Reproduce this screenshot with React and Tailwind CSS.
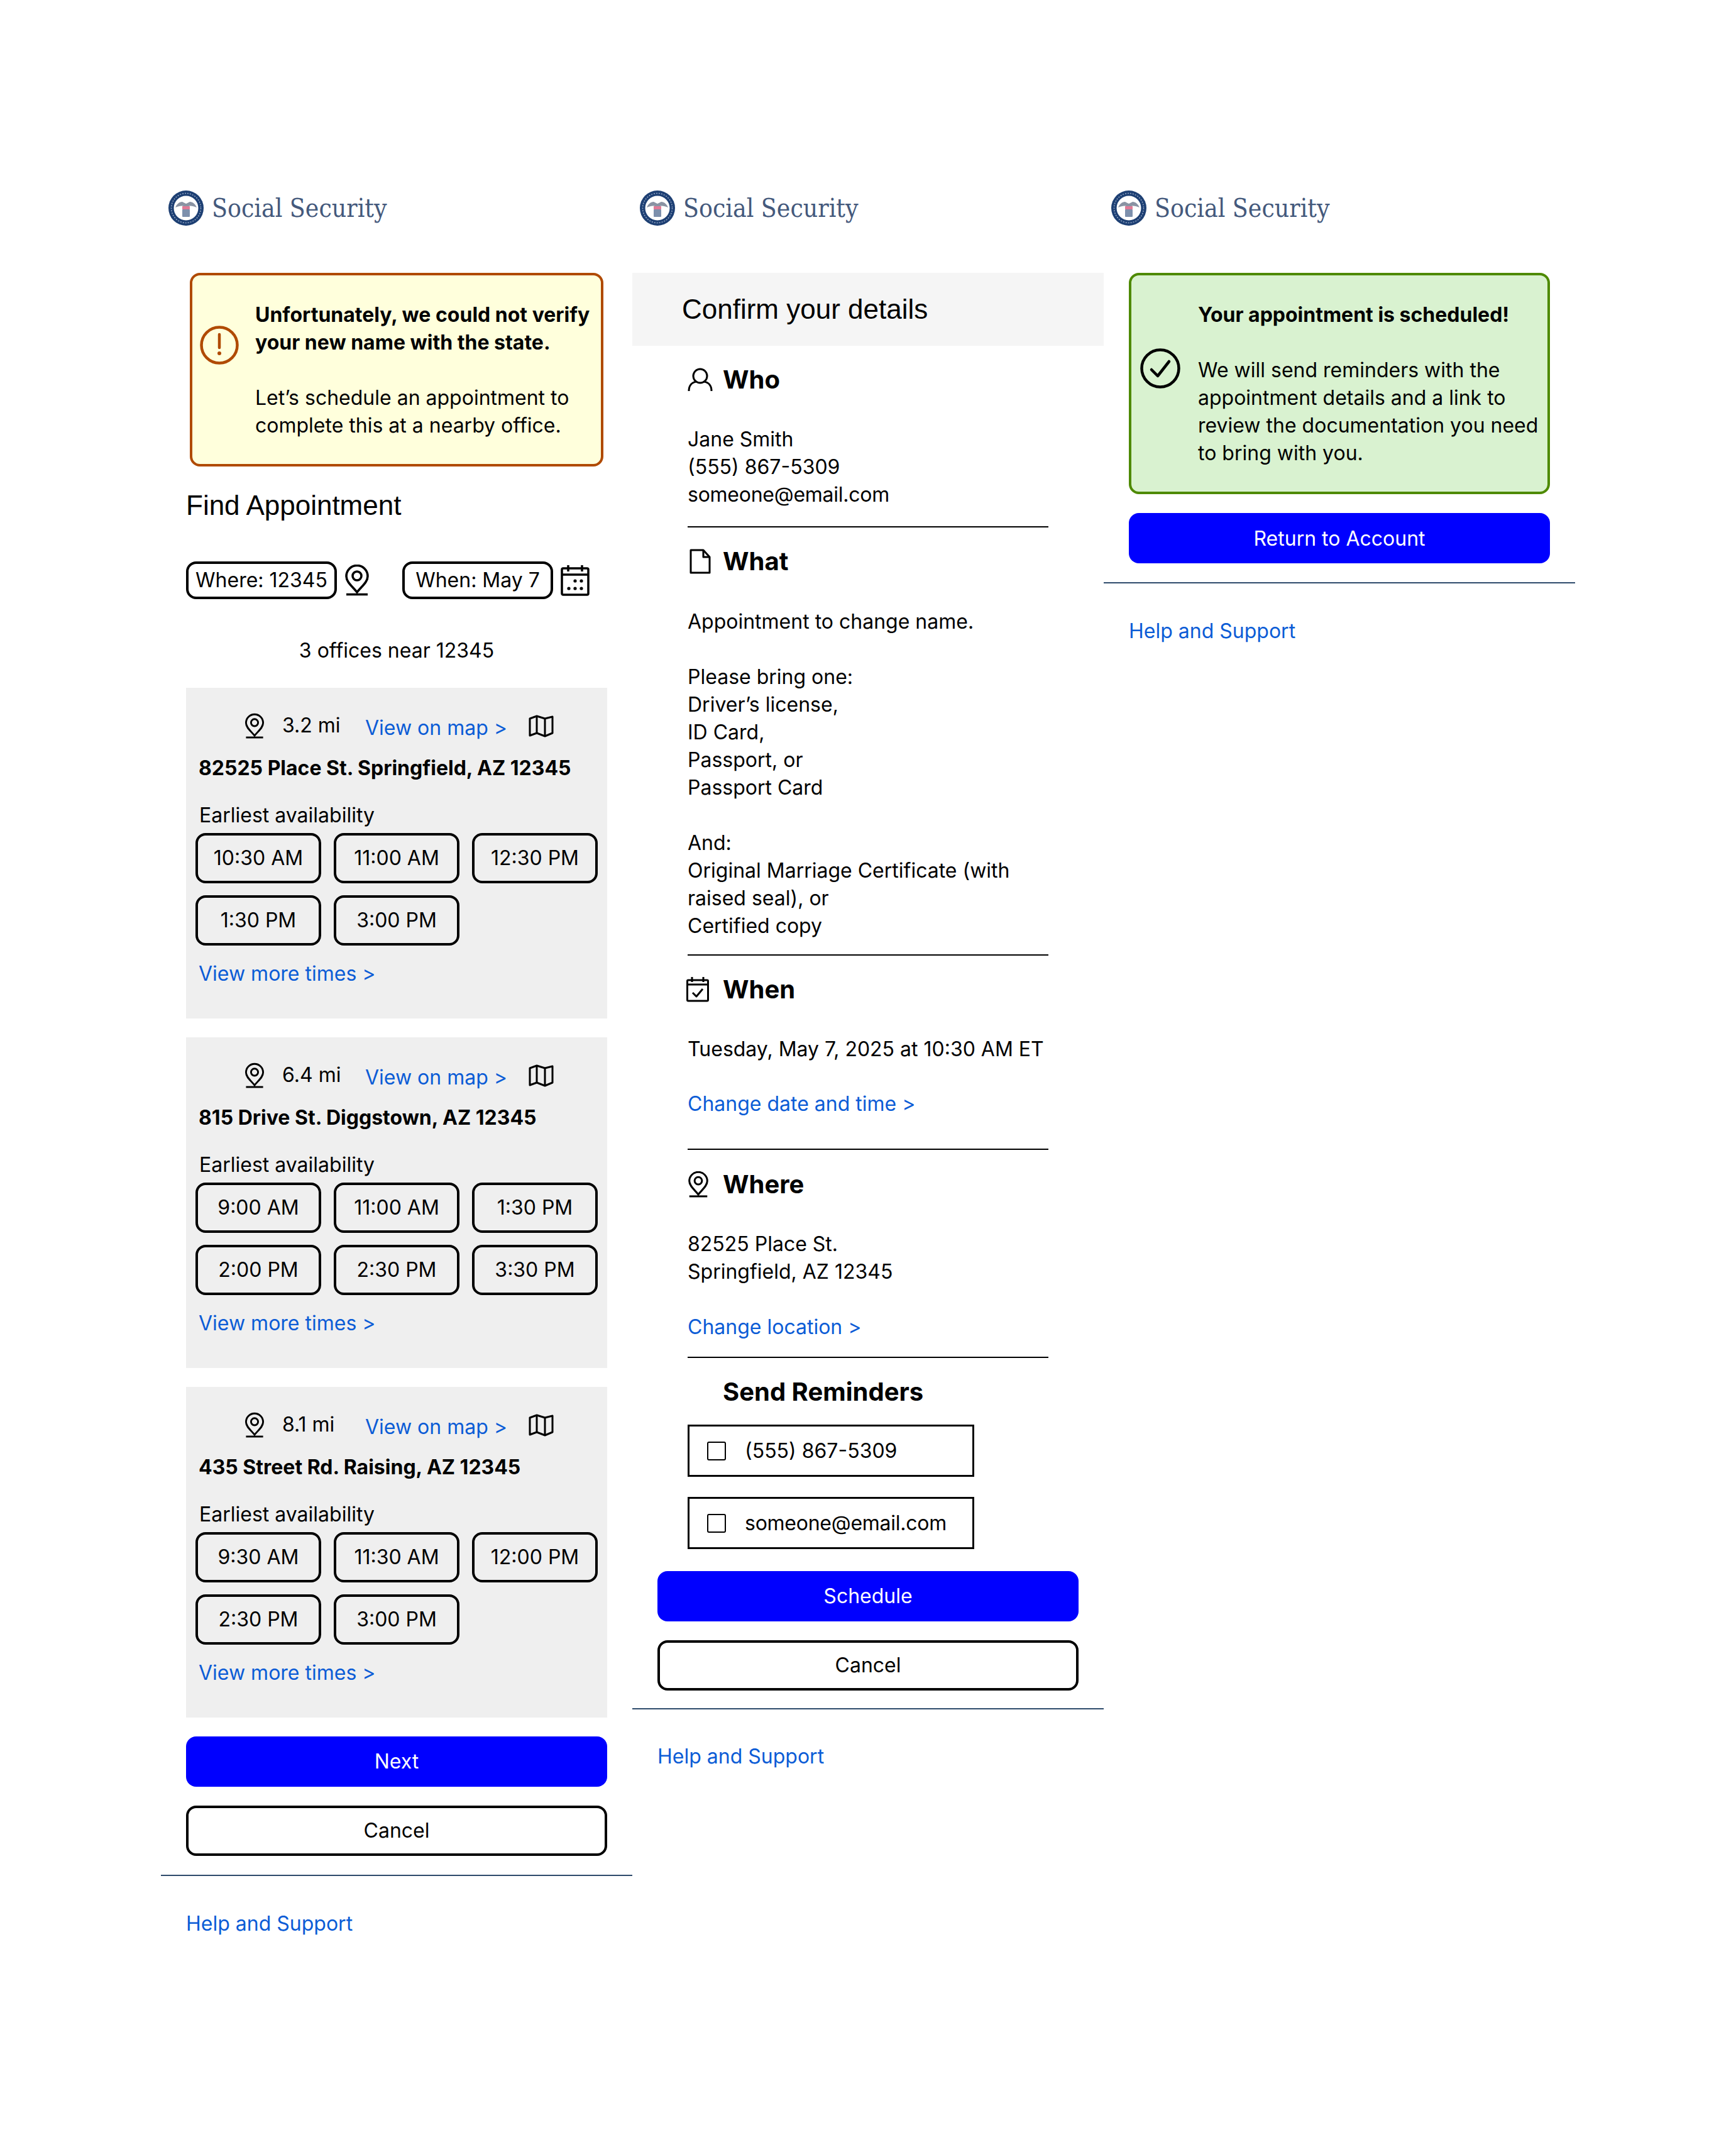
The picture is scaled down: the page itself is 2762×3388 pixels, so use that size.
const inter = "font-['Inter',sans-serif]"

function Pin({ className }) {
  return (
    <svg viewBox="0 0 40 50" fill="none" stroke="currentColor" strokeWidth="3.6" className={className}>
      <path d="M20 44C13 35 3 28 3 18.5a17 17 0 0 1 34 0C37 28 27 35 20 44Z" />
      <circle cx="20" cy="18" r="7" />
      <path d="M3 47.5h34" />
    </svg>
  )
}

function MapIcon() {
  return (
    <svg viewBox="0 0 40 36" fill="none" stroke="currentColor" strokeWidth="3" strokeLinejoin="round" className="w-[40px] h-[36px]">
      <path d="M2 6l11-4 13 4 12-3v26l-12 5-13-5-11 4Z" />
      <path d="M13 2v27M26 6v28" />
    </svg>
  )
}

function CalendarDots() {
  return (
    <svg viewBox="0 0 46 50" fill="none" stroke="currentColor" strokeWidth="3.5" strokeLinejoin="round" className="w-[46px] h-[50px]">
      <rect x="2" y="6" width="42" height="42" rx="2" />
      <path d="M2 16h42M12 1v10M34 1v10" />
      <g fill="currentColor" stroke="none">
        <circle cx="23" cy="26" r="2.6" />
        <circle cx="33" cy="26" r="2.6" />
        <circle cx="13" cy="38" r="2.6" />
        <circle cx="23" cy="38" r="2.6" />
        <circle cx="33" cy="38" r="2.6" />
      </g>
    </svg>
  )
}

function Seal() {
  return (
    <svg viewBox="0 0 56 56" className="w-[56px] h-[56px] shrink-0">
      <circle cx="28" cy="28" r="28" fill="#1d3f73" />
      <circle cx="28" cy="28" r="23.5" fill="none" stroke="#8fa3c2" strokeWidth="1.5" strokeDasharray="2 2" />
      <circle cx="28" cy="28" r="19.5" fill="#fff" />
      <path d="M11 27c2-5 6-9 11-9l6 3 6-3c5 0 9 4 11 9-5-2-9-3-13-2H24c-4-1-8 0-13 2Z" fill="#8a93a3" />
      <rect x="22" y="25" width="12" height="5" fill="#e07a96" />
      <rect x="22" y="30" width="12" height="12" rx="1" fill="#7d90ad" />
    </svg>
  )
}

function Logo() {
  return (
    <div className="h-[62px] flex items-center">
      <div className="ml-[12px]"><Seal /></div>
      <span className="ml-[13px] font-['DejaVu_Serif_Condensed','DejaVu_Serif',serif] text-[40.5px] leading-[62px] text-[#44597c] whitespace-nowrap">Social Security</span>
    </div>
  )
}

function Divider() {
  return <div className="h-[2px] bg-[#2d4a6b]" />
}

function Help({ gap = "mt-[54px]" }) {
  return (
    <div className={`pl-[40px] ${gap}`}>
      <a className="block text-[#0b5cd6] leading-[44px]">Help and Support</a>
    </div>
  )
}

function TextLines({ lines }) {
  return lines.map((l, i) => <div key={i} className="leading-[44px] h-[44px]">{l}</div>)
}

function Office({ dist, address, times }) {
  return (
    <div className="bg-[#efefef] h-[526px] px-[15px] pt-[40px]">
      <div className="flex items-center h-[42px] relative">
        <div className="ml-[78px] text-black"><Pin className="w-[32px] h-[42px]" /></div>
        <span className="ml-[28px] w-[132px] -mt-[2px]">{dist}</span>
        <a className="text-[#0b5cd6] mt-[6px] w-[260px]">View on map &gt;</a>
        <MapIcon />
      </div>
      <div className="mt-[24px] pl-[5px] font-bold leading-[44px]">{address}</div>
      <div className="mt-[31px] pl-[6px] leading-[44px] mb-[6px]">Earliest availability</div>
      <div className="grid grid-cols-[200px_200px_200px] gap-x-[20px] gap-y-[19px]">
        {times.map(t => (
          <div key={t} className="h-[80px] border-[4px] border-black rounded-[16px] flex items-center justify-center">{t}</div>
        ))}
      </div>
      <a className="block mt-[23px] pl-[5px] text-[#0b5cd6] leading-[44px]">View more times &gt;</a>
    </div>
  )
}

function FindColumn() {
  return (
    <div className="w-[750px] shrink-0">
      <Logo />
      <div className="mt-[72px] ml-[46px] w-[658px] h-[308px] bg-[#ffffdc] border-[4px] border-[#b04a00] rounded-[16px] flex items-center">
        <svg viewBox="0 0 62 62" fill="none" className="ml-[12px] -mt-[78px] w-[62px] h-[62px] shrink-0">
          <circle cx="31" cy="31" r="28.5" stroke="#b04a00" strokeWidth="4.5" />
          <path d="M31 14v21" stroke="#b04a00" strokeWidth="4.5" strokeLinecap="round" />
          <circle cx="31" cy="44" r="3" fill="#b04a00" />
        </svg>
        <div className="ml-[26px] mt-[2px]">
          <div className="font-bold leading-[44px]">Unfortunately, we could not verify</div>
          <div className="font-bold leading-[44px]">your new name with the state.</div>
          <div className="h-[44px]" />
          <div className="leading-[44px]">Let’s schedule an appointment to</div>
          <div className="leading-[44px]">complete this at a nearby office.</div>
        </div>
      </div>
      <div className="px-[40px]">
        <h2 className="mt-[34px] font-['Liberation_Sans',sans-serif] text-[44px] leading-[56px] font-normal">Find Appointment</h2>
        <div className="mt-[61px] flex items-center h-[60px]">
          <div className="w-[240px] h-[60px] border-[4px] border-black rounded-[16px] flex items-center justify-center">Where: 12345</div>
          <div className="ml-[12px]"><Pin className="w-[40px] h-[50px]" /></div>
          <div className="ml-[52px] w-[240px] h-[60px] border-[4px] border-black rounded-[16px] flex items-center justify-center">When: May 7</div>
          <div className="ml-[12px]"><CalendarDots /></div>
        </div>
        <div className="mt-[60px] text-center leading-[44px]">3 offices near 12345</div>
        <div className="mt-[37px] flex flex-col gap-[30px]">
          <Office dist="3.2 mi" address="82525 Place St. Springfield, AZ 12345" times={["10:30 AM", "11:00 AM", "12:30 PM", "1:30 PM", "3:00 PM"]} />
          <Office dist="6.4 mi" address="815 Drive St. Diggstown, AZ 12345" times={["9:00 AM", "11:00 AM", "1:30 PM", "2:00 PM", "2:30 PM", "3:30 PM"]} />
          <Office dist="8.1 mi" address="435 Street Rd. Raising, AZ 12345" times={["9:30 AM", "11:30 AM", "12:00 PM", "2:30 PM", "3:00 PM"]} />
        </div>
        <button className="mt-[30px] w-full h-[80px] bg-[#0000ff] text-white rounded-[16px]">Next</button>
        <button className="mt-[30px] w-full h-[80px] border-[4px] border-black rounded-[16px]">Cancel</button>
      </div>
      <div className="mt-[30px]"><Divider /></div>
      <Help />
    </div>
  )
}

function Heading({ icon, children, className = "" }) {
  return (
    <div className={`flex items-center h-[44px] ${className}`}>
      <div className="w-[56px] shrink-0">{icon}</div>
      <span className="font-bold text-[40px] leading-[44px]">{children}</span>
    </div>
  )
}

function ConfirmColumn() {
  return (
    <div className="w-[750px] shrink-0">
      <Logo />
      <div className="mt-[72px] h-[116px] bg-[#f5f5f5] pl-[79px] flex items-center font-['Liberation_Sans',sans-serif] text-[44px]">Confirm your details</div>
      <div className="pl-[88px] pr-[88px]">
        <Heading className="mt-[32px]" icon={
          <svg viewBox="0 0 40 38" fill="none" stroke="currentColor" strokeWidth="3" className="w-[40px] h-[38px]">
            <circle cx="20" cy="13" r="11" />
            <path d="M2 37c0-9 5-14 12-15M38 37c0-9-5-14-12-15" />
          </svg>
        }>Who</Heading>
        <div className="mt-[51px]">
          <TextLines lines={["Jane Smith", "(555) 867-5309"]} />
          <div className="leading-[44px] h-[44px] tracking-[-0.25px]">someone@email.com</div>
        </div>
        <div className="mt-[28px] h-[2px] bg-black" />
        <Heading className="mt-[32px]" icon={
          <svg viewBox="0 0 34 40" fill="none" stroke="currentColor" strokeWidth="3" strokeLinejoin="round" className="w-[34px] h-[40px] ml-[3px]">
            <path d="M2 2h20l10 11v25H2Z" />
            <path d="M22 2v11h10" />
          </svg>
        }>What</Heading>
        <div className="mt-[52px]">
          <TextLines lines={["Appointment to change name."]} />
          <div className="mt-[44px]">
            <TextLines lines={["Please bring one:", "Driver’s license,", "ID Card,", "Passport, or", "Passport Card"]} />
          </div>
          <div className="mt-[44px]">
            <TextLines lines={["And:", "Original Marriage Certificate (with", "raised seal), or", "Certified copy"]} />
          </div>
        </div>
        <div className="mt-[23px] h-[2px] bg-black" />
        <Heading className="mt-[32px]" icon={
          <svg viewBox="0 0 36 40" fill="none" stroke="currentColor" strokeWidth="3" strokeLinejoin="round" className="w-[36px] h-[40px] -ml-[2px]">
            <rect x="1.5" y="5" width="33" height="33" rx="1.5" />
            <path d="M1.5 12h33M9 0v8M27 0v8" />
            <path d="M10 25l6 6 10-12" />
          </svg>
        }>When</Heading>
        <div className="mt-[51px]"><TextLines lines={["Tuesday, May 7, 2025 at 10:30 AM ET"]} /></div>
        <a className="block mt-[43px] text-[#0b5cd6] leading-[44px]">Change date and time &gt;</a>
        <div className="mt-[49px] h-[2px] bg-black" />
        <Heading className="mt-[33px]" icon={<Pin className="w-[34px] h-[42px]" />}>Where</Heading>
        <div className="mt-[51px]"><TextLines lines={["82525 Place St.", "Springfield, AZ 12345"]} /></div>
        <a className="block mt-[44px] text-[#0b5cd6] leading-[44px]">Change location &gt;</a>
        <div className="mt-[25px] h-[2px] bg-black" />
        <Heading className="mt-[32px]" icon={null}>Send Reminders</Heading>
        {["(555) 867-5309", "someone@email.com"].map((t, i) => (
          <div key={t} className={`${i ? "mt-[32px]" : "mt-[30px]"} w-[456px] h-[83px] border-[3px] border-black flex items-center pl-[28px]`}>
            <div className="w-[30px] h-[30px] border-[2px] border-black rounded-[3px]" />
            <span className={`ml-[30px] ${i ? "tracking-[-0.25px]" : ""}`}>{t}</span>
          </div>
        ))}
      </div>
      <div className="px-[40px]">
        <button className="mt-[35px] w-full h-[80px] bg-[#0000ff] text-white rounded-[16px]">Schedule</button>
        <button className="mt-[30px] w-full h-[80px] border-[4px] border-black rounded-[16px]">Cancel</button>
      </div>
      <div className="mt-[28px]"><Divider /></div>
      <Help gap="mt-[53px]" />
    </div>
  )
}

function DoneColumn() {
  return (
    <div className="w-[750px] shrink-0">
      <Logo />
      <div className="mt-[72px] mx-[40px] h-[352px] bg-[#d9f2d0] border-[4px] border-[#4e8a00] rounded-[16px] flex items-center">
        <svg viewBox="0 0 64 64" fill="none" className="ml-[14px] -mt-[48px] w-[64px] h-[64px] shrink-0">
          <circle cx="32" cy="32" r="29.5" stroke="#000" strokeWidth="4.5" />
          <path d="M18 34l10 10 18-23" stroke="#000" strokeWidth="4.5" strokeLinecap="round" strokeLinejoin="round" />
        </svg>
        <div className="ml-[28px] mt-[2px]">
          <div className="font-bold leading-[44px]">Your appointment is scheduled!</div>
          <div className="h-[44px]" />
          <TextLines lines={["We will send reminders with the", "appointment details and a link to", "review the documentation you need", "to bring with you."]} />
        </div>
      </div>
      <div className="px-[40px]">
        <button className="mt-[30px] w-full h-[80px] bg-[#0000ff] text-white rounded-[16px] pt-[1px]">Return to Account</button>
      </div>
      <div className="mt-[30px]"><Divider /></div>
      <Help />
    </div>
  )
}

export default function App() {
  return (
    <div className={`${inter} min-h-[3388px] bg-white text-black text-[32px] pl-[256px] pt-[300px] flex items-start`}>
      <FindColumn />
      <ConfirmColumn />
      <DoneColumn />
    </div>
  )
}
